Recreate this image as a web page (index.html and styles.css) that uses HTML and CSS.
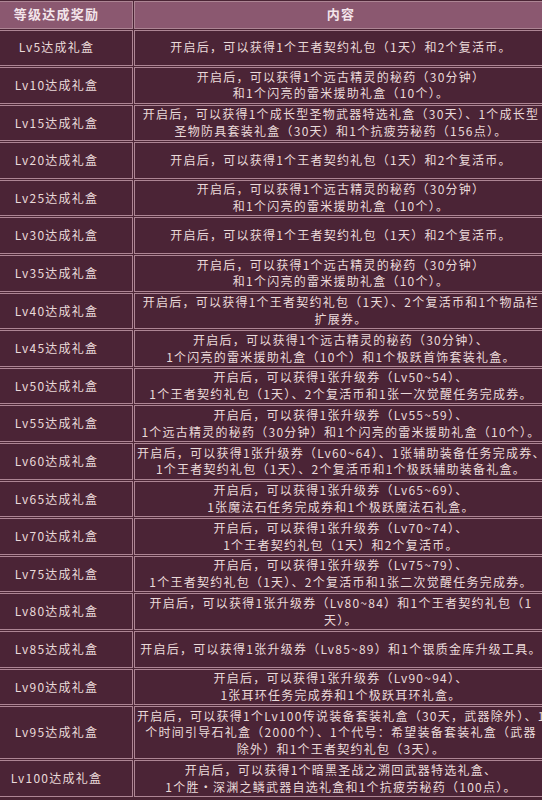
FILE: index.html
```html
<!DOCTYPE html>
<html lang="zh-CN">
<head>
<meta charset="utf-8">
<title>等级达成奖励</title>
<link rel="stylesheet" href="styles.css">
</head>
<body>
<table class="rewards">
  <colgroup><col class="c-level"><col class="c-content"></colgroup>
  <thead>
    <tr><th>等级达成奖励</th><th>内容</th></tr>
  </thead>
  <tbody>
    <tr><td>Lv5达成礼盒</td><td>开启后，可以获得1个王者契约礼包（1天）和2个复活币。</td></tr>
    <tr><td>Lv10达成礼盒</td><td>开启后，可以获得1个远古精灵的秘药（30分钟）<br>和1个闪亮的雷米援助礼盒（10个）。</td></tr>
    <tr><td>Lv15达成礼盒</td><td>开启后，可以获得1个成长型圣物武器特选礼盒（30天）、1个成长型<br>圣物防具套装礼盒（30天）和1个抗疲劳秘药（156点）。</td></tr>
    <tr><td>Lv20达成礼盒</td><td>开启后，可以获得1个王者契约礼包（1天）和2个复活币。</td></tr>
    <tr><td>Lv25达成礼盒</td><td>开启后，可以获得1个远古精灵的秘药（30分钟）<br>和1个闪亮的雷米援助礼盒（10个）。</td></tr>
    <tr><td>Lv30达成礼盒</td><td>开启后，可以获得1个王者契约礼包（1天）和2个复活币。</td></tr>
    <tr><td>Lv35达成礼盒</td><td>开启后，可以获得1个远古精灵的秘药（30分钟）<br>和1个闪亮的雷米援助礼盒（10个）。</td></tr>
    <tr><td>Lv40达成礼盒</td><td>开启后，可以获得1个王者契约礼包（1天）、2个复活币和1个物品栏<br>扩展券。</td></tr>
    <tr><td>Lv45达成礼盒</td><td>开启后，可以获得1个远古精灵的秘药（30分钟）、<br>1个闪亮的雷米援助礼盒（10个）和1个极跃首饰套装礼盒。</td></tr>
    <tr><td>Lv50达成礼盒</td><td>开启后，可以获得1张升级券（Lv50~54）、<br>1个王者契约礼包（1天）、2个复活币和1张一次觉醒任务完成券。</td></tr>
    <tr><td>Lv55达成礼盒</td><td>开启后，可以获得1张升级券（Lv55~59）、<br>1个远古精灵的秘药（30分钟）和1个闪亮的雷米援助礼盒（10个）。</td></tr>
    <tr><td>Lv60达成礼盒</td><td>开启后，可以获得1张升级券（Lv60~64）、1张辅助装备任务完成券、<br>1个王者契约礼包（1天）、2个复活币和1个极跃辅助装备礼盒。</td></tr>
    <tr><td>Lv65达成礼盒</td><td>开启后，可以获得1张升级券（Lv65~69）、<br>1张魔法石任务完成券和1个极跃魔法石礼盒。</td></tr>
    <tr><td>Lv70达成礼盒</td><td>开启后，可以获得1张升级券（Lv70~74）、<br>1个王者契约礼包（1天）和2个复活币。</td></tr>
    <tr><td>Lv75达成礼盒</td><td>开启后，可以获得1张升级券（Lv75~79）、<br>1个王者契约礼包（1天）、2个复活币和1张二次觉醒任务完成券。</td></tr>
    <tr><td>Lv80达成礼盒</td><td>开启后，可以获得1张升级券（Lv80~84）和1个王者契约礼包（1<br>天）。</td></tr>
    <tr><td>Lv85达成礼盒</td><td>开启后，可以获得1张升级券（Lv85~89）和1个银质金库升级工具。</td></tr>
    <tr><td>Lv90达成礼盒</td><td>开启后，可以获得1张升级券（Lv90~94）、<br>1张耳环任务完成券和1个极跃耳环礼盒。</td></tr>
    <tr><td>Lv95达成礼盒</td><td>开启后，可以获得1个Lv100传说装备套装礼盒（30天，武器除外）、1<br>个时间引导石礼盒（2000个）、1个代号：希望装备套装礼盒（武器<br>除外）和1个王者契约礼包（3天）。</td></tr>
    <tr><td>Lv100达成礼盒</td><td>开启后，可以获得1个暗黑圣战之溯回武器特选礼盒、<br>1个胜・深渊之鳞武器自选礼盒和1个抗疲劳秘药（100点）。</td></tr>
  </tbody>
</table>
</body>
</html>
```
FILE: styles.css
```css
html, body {
  margin: 0;
  padding: 0;
  background: #4a2434;
  overflow: hidden;
}

.rewards {
  margin-left: -21px;
  width: 570px;
  table-layout: fixed;
  border-collapse: separate;
  border-spacing: 1px;
  background: #4a2434;
  font-family: "Noto Sans CJK SC", "Noto Sans", sans-serif;
  font-size: 12px;
  letter-spacing: 1.25px;
  line-height: 16.7px;
  color: #eadada;
}

.c-level { width: 153px; }
.c-content { width: 414px; }

.rewards th,
.rewards td {
  border: 1px solid #ad8594;
  text-align: center;
  vertical-align: middle;
  white-space: nowrap;
}

.rewards th {
  background: #8b5870;
  color: #f3e4ea;
  font-weight: bold;
  font-size: 13px;
  height: 27.5px;
  box-sizing: border-box;
  padding: 0 2px;
}

.rewards td {
  background: #4b2436;
  height: 36.6px;
  box-sizing: border-box;
  padding: 0.6px 2px;
}
```
